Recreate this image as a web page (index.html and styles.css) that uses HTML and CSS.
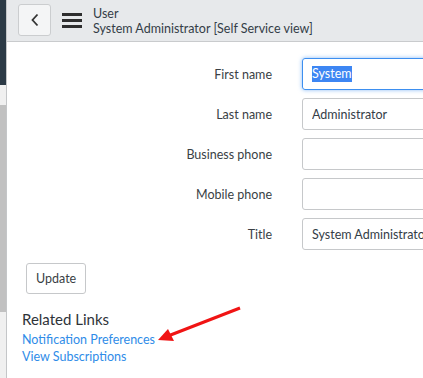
FILE: index.html
```html
<!DOCTYPE html>
<html lang="en">
<head>
    <meta charset="UTF-8">
    <title>User - System Administrator</title>
    <link rel="stylesheet" href="styles.css">
</head>
<body>
    <div class="page">
        <div class="rail">
            <div class="rail-top"></div>
            <div class="rail-track"><div class="rail-thumb"></div></div>
        </div>

        <div class="main">
            <!-- Header -->
            <div class="header">
                <button class="back-btn" type="button">
                    <svg width="10" height="14" viewBox="0 0 10 14"><path d="M7.5 1.5 L2.5 7 L7.5 12.5" fill="none" stroke="#333" stroke-width="1.8"/></svg>
                </button>
                <div class="menu-icon">
                    <span></span><span></span><span></span>
                </div>
                <div class="titles">
                    <div class="title-small">User</div>
                    <div class="title-main">System Administrator [Self Service view]</div>
                </div>
            </div>

            <!-- Form -->
            <form class="user-form">
                <div class="row">
                    <label>First name</label>
                    <div class="field focused"><span class="selected">System</span></div>
                </div>
                <div class="row">
                    <label>Last name</label>
                    <input type="text" value="Administrator">
                </div>
                <div class="row">
                    <label>Business phone</label>
                    <input type="text">
                </div>
                <div class="row">
                    <label>Mobile phone</label>
                    <input type="text">
                </div>
                <div class="row">
                    <label>Title</label>
                    <input type="text" value="System Administrator">
                </div>
            </form>

            <button class="update-btn" type="button">Update</button>

            <div class="related">
                <h3>Related Links</h3>
                <a href="#">Notification Preferences</a>
                <a href="#">View Subscriptions</a>
            </div>
        </div>

        <!-- annotation arrow -->
        <svg class="arrow" width="90" height="40" viewBox="0 0 90 40">
            <line x1="86" y1="3" x2="14" y2="31" stroke="#f01414" stroke-width="3"/>
            <polygon points="4,35 14,24 20,36" fill="#f01414"/>
        </svg>
    </div>
</body>
</html>
```

FILE: styles.css
```css
/* General */
body {
    margin: 0;
    font-family: 'Lato', 'Noto Sans', sans-serif;
    font-size: 12.5px;
    color: #343d47;
    background: #fff;
}
.page {
    display: flex;
    height: 378px;
    overflow: hidden;
    position: relative;
}

/* Left rail */
.rail {
    width: 6px;
    flex: none;
    border-right: 1px solid #c4c6c8;
    display: flex;
    flex-direction: column;
}
.rail-top {
    height: 85px;
    background: #2c3a46;
}
.rail-track {
    flex: 1;
    background: #f0f0f0;
    padding-top: 20px;
}
.rail-thumb {
    height: 207px;
    background: #c1c1c1;
}

.main {
    flex: 1;
    min-width: 0;
    overflow: hidden;
}

/* Header */
.header {
    height: 41px;
    background: #e7e9eb;
    border-bottom: 1px solid #c9cbcd;
    display: flex;
    align-items: center;
    padding-left: 11px;
}
.back-btn {
    width: 33px;
    height: 32px;
    margin-top: -2px;
    border: 1px solid #cbcdcf;
    border-radius: 3px;
    background: #f4f5f6;
    display: flex;
    align-items: center;
    justify-content: center;
    padding: 0;
}
.menu-icon {
    margin-left: 11px;
    width: 20px;
    display: flex;
    flex-direction: column;
    gap: 3px;
}
.menu-icon span {
    height: 3px;
    background: #2e2e2e;
}
.titles {
    margin-left: 11px;
    line-height: 15px;
    color: #343d47;
}

/* Form */
.user-form {
    padding-top: 16px;
}
.row {
    display: flex;
    align-items: center;
    height: 32px;
    margin-bottom: 8px;
}
.row label {
    flex: none;
    width: 265px;
    text-align: right;
    color: #3a3f45;
}
.row input, .field {
    margin-left: 30px;
    width: 240px;
    flex: none;
    box-sizing: border-box;
    height: 32px;
    border: 1px solid #c6c8ca;
    border-radius: 3px;
    padding: 0 9px;
    font: inherit;
    color: #343d47;
}
.field {
    display: flex;
    align-items: center;
}
.field.focused {
    border-color: #3d8ff0;
    box-shadow: 0 0 4px rgba(61, 143, 240, 0.6);
}
.selected {
    background: #3d86f3;
    color: #fff;
    line-height: 16px;
}

/* Update button */
.update-btn {
    margin: 5px 0 0 19px;
    height: 31px;
    padding: 0 9px;
    border: 1px solid #c6c8ca;
    border-radius: 3px;
    background: #fff;
    font: inherit;
    color: #3a3f45;
}

/* Related links */
.related {
    padding-left: 15px;
    margin-top: 17px;
}
.related h3 {
    margin: 0 0 3px;
    font-size: 15px;
    font-weight: normal;
    color: #2e3338;
    line-height: 17px;
}
.related a {
    display: block;
    color: #2f8ce8;
    text-decoration: none;
    line-height: 17px;
}

/* Arrow overlay */
.arrow {
    position: absolute;
    left: 154px;
    top: 305px;
}
```
